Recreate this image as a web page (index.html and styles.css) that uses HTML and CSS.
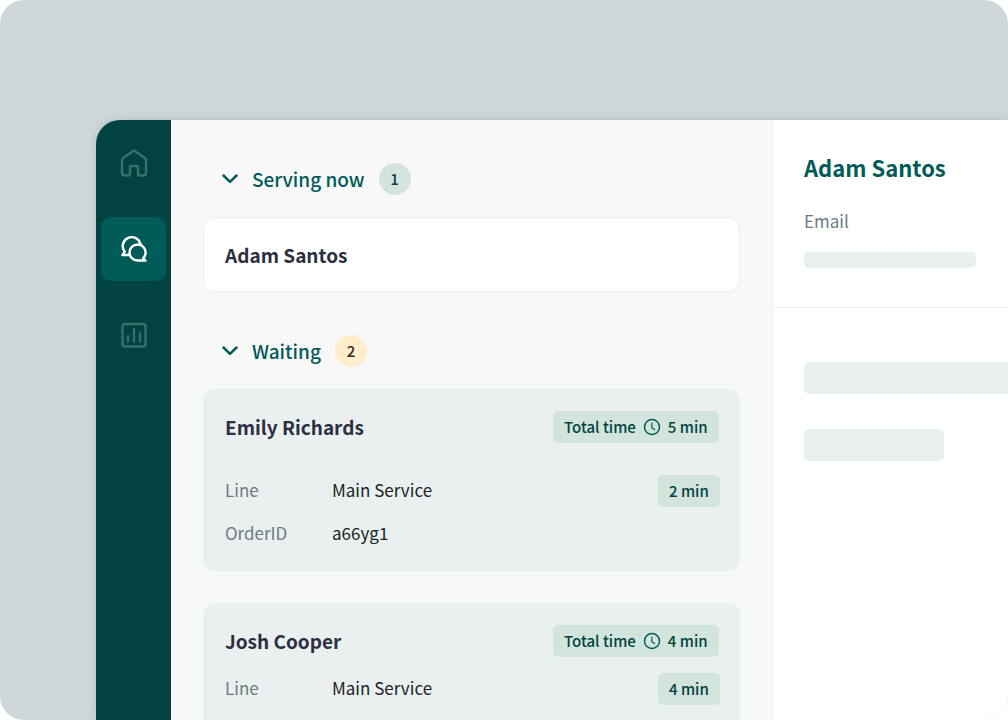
FILE: index.html
```html
<!DOCTYPE html>
<html lang="en">
<head>
<meta charset="utf-8">
<meta name="viewport" content="width=device-width, initial-scale=1">
<title>Service desk</title>
<link rel="stylesheet" href="styles.css">
</head>
<body>
<div class="stage">
  <div class="app">
    <nav class="rail" aria-label="Main">
      <button class="rail-item" type="button" aria-label="Home">
        <svg class="rail-icon" viewBox="0 0 28 28" fill="none" stroke="currentColor" stroke-width="2.400" stroke-linejoin="round"><path d="M14 1.5 2.7 9.3Q2 9.8 2 10.8V23.5Q2 26.5 5 26.5H8.5Q10 26.5 10 25V18.5Q10 17 11.5 17H16.5Q18 17 18 18.5V25Q18 26.5 19.500 26.500H23Q26 26.500 26 23.500V10.800Q26 9.800 25.300 9.300Z"/></svg>
      </button>
      <button class="rail-item is-active" type="button" aria-label="Conversations" aria-current="page">
        <svg class="rail-icon" viewBox="0 0 28 28" fill="none" stroke="currentColor" stroke-width="2.400" stroke-linecap="round" stroke-linejoin="round"><path d="M9 20H2.500L4.700 16.800A9 9 0 1 1 20.400 8.800"/><path d="M17.500 9.500a8 8 0 1 0 0 16H25.500L23.200 23.100A8 8 0 0 0 17.500 9.500Z"/></svg>
      </button>
      <button class="rail-item" type="button" aria-label="Reports">
        <svg class="rail-icon" viewBox="0 0 28 28" fill="none" stroke="currentColor" stroke-width="2.400" stroke-linecap="round"><rect x="2.500" y="3" width="23" height="22.500" rx="2.500"/><path d="M8 15v5.500M14 8v12.500M20 12.500v8"/></svg>
      </button>
    </nav>

    <main class="queue">
      <section class="group">
        <h2 class="group-head">
          <button class="group-toggle" type="button" aria-expanded="true">
            <svg class="chevron" viewBox="0 0 16 10" fill="none" stroke="currentColor" stroke-width="2.500" stroke-linecap="round" stroke-linejoin="round"><path d="m1.500 1.500 6.500 6.300 6.500-6.300"/></svg>
            Serving now
            <span class="count count-green">1</span>
          </button>
        </h2>
        <article class="card card-plain">
          <h3 class="name">Adam Santos</h3>
        </article>
      </section>

      <section class="group">
        <h2 class="group-head">
          <button class="group-toggle" type="button" aria-expanded="true">
            <svg class="chevron" viewBox="0 0 16 10" fill="none" stroke="currentColor" stroke-width="2.500" stroke-linecap="round" stroke-linejoin="round"><path d="m1.500 1.500 6.500 6.300 6.500-6.300"/></svg>
            Waiting
            <span class="count count-yellow">2</span>
          </button>
        </h2>
        <div class="cards">
          <article class="card card-roomy">
            <header class="card-head">
              <h3 class="name">Emily Richards</h3>
              <div class="slot slot-wide">
                <span class="tag">Total time
                  <svg class="clock" viewBox="0 0 18 18" fill="none" stroke="currentColor" stroke-width="1.500" stroke-linecap="round" stroke-linejoin="round"><circle cx="9" cy="9" r="7.500"/><path d="M8.800 5v4.800l2.800 1.800" stroke-width="1.200"/></svg>
                  5 min</span>
              </div>
            </header>
            <dl class="facts">
              <dt>Line</dt><dd>Main Service</dd><dd class="slot slot-short"><span class="tag">2 min</span></dd>
              <dt>OrderID</dt><dd>a66yg1</dd>
            </dl>
          </article>
          <article class="card">
            <header class="card-head">
              <h3 class="name">Josh Cooper</h3>
              <div class="slot slot-wide">
                <span class="tag">Total time
                  <svg class="clock" viewBox="0 0 18 18" fill="none" stroke="currentColor" stroke-width="1.500" stroke-linecap="round" stroke-linejoin="round"><circle cx="9" cy="9" r="7.500"/><path d="M8.800 5v4.800l2.800 1.800" stroke-width="1.200"/></svg>
                  4 min</span>
              </div>
            </header>
            <dl class="facts">
              <dt>Line</dt><dd>Main Service</dd><dd class="slot slot-short"><span class="tag">4 min</span></dd>
            </dl>
          </article>
        </div>
      </section>
    </main>

    <aside class="detail">
      <div class="detail-top">
        <h2 class="detail-name">Adam Santos</h2>
        <p class="detail-label">Email</p>
        <div class="bar bar-line"></div>
      </div>
      <div class="detail-body">
        <div class="bar bar-full"></div>
        <div class="bar bar-short"></div>
      </div>
    </aside>
  </div>
</div>
</body>
</html>
```
FILE: styles.css
```css
* { box-sizing: border-box; }

body {
  margin: 0;
  background: #fff;
  color: #1f1f24;
  font-family: "Noto Sans CJK SC", "Noto Sans", sans-serif;
  font-size: 17px;
  line-height: 24px;
}

h2, h3, p, dl, dd { margin: 0; }

button {
  border: 0;
  padding: 0;
  background: none;
  color: inherit;
  font: inherit;
  cursor: pointer;
}

.stage {
  display: flex;
  height: 100vh;
  padding: 120px 0 0 96px;
  overflow: hidden;
  border-radius: 24px;
  background: #ced6d9;
}

.app {
  display: grid;
  flex: 1;
  grid-template-columns: 75px minmax(0, 1fr) 236px;
  border-top-left-radius: 24px;
  box-shadow: 0 0 8px rgba(0, 40, 40, 0.12);
}

.rail {
  display: flex;
  flex-direction: column;
  gap: 22px;
  padding: 11px 5px;
  border-top-left-radius: 24px;
  background: #004341;
  color: #39706e;
}

.rail-item {
  display: grid;
  place-items: center;
  height: 64px;
  border-radius: 10px;
}

.rail-item.is-active {
  background: #005b59;
  color: #fff;
}

.rail-icon {
  width: 28px;
  height: 28px;
}

.queue {
  display: flex;
  flex-direction: column;
  gap: 43px;
  min-height: 0;
  padding: 43px 32px 0;
  overflow: hidden;
  background: #f8f8f8;
}

.group { flex: none; }

.group-head {
  margin-bottom: 22px;
  color: #005b59;
  font-size: 19px;
  font-weight: 500;
}

.group-toggle {
  display: flex;
  align-items: center;
  gap: 14px;
  padding-left: 19px;
}

.chevron {
  width: 16px;
  height: 10px;
}

.count {
  width: 32px;
  border-radius: 50%;
  font-size: 15px;
  line-height: 32px;
  text-align: center;
}

.count-green {
  background: #d2e4dc;
  color: #004341;
}

.count-yellow {
  background: #ffedcb;
  color: #3b2428;
}

.cards {
  display: grid;
  gap: 32px;
}

.card {
  display: grid;
  gap: 16px;
  padding: 22px 22px 24px;
  border-radius: 12px;
  background: #eaf0f0;
}

.card-roomy { gap: 32px; }

.card-plain {
  padding: 25px 21px 24px;
  border: 1px solid #eaf0f0;
  background: #fff;
}

.name {
  color: #2e2e41;
  font-size: 19px;
  font-weight: 700;
}

.card-head {
  display: flex;
  align-items: center;
  justify-content: space-between;
}

.slot { display: flex; }

.slot-wide { width: 165px; }

.slot-short { width: 60px; }

.tag {
  display: flex;
  align-items: center;
  gap: 7px;
  padding: 0 11px;
  border-radius: 5px;
  background: #d2e4dc;
  color: #004341;
  font-size: 15px;
  font-weight: 500;
  line-height: 32px;
  white-space: nowrap;
}

.clock {
  width: 18px;
  height: 18px;
  color: #005b59;
}

.facts {
  display: grid;
  grid-template-columns: 107px 1fr auto;
  row-gap: 14px;
  align-items: center;
}

.facts dt,
.facts dd { padding-bottom: 2px; }

.facts dt { color: #6e7a80; }

.facts .slot { padding-bottom: 0; }

.detail {
  border-left: 1px solid #eaf0f0;
  background: #fff;
}

.detail-top {
  padding: 35px 0 39px 31px;
  border-bottom: 1px solid #eaf0f0;
}

.detail-name {
  color: #005b59;
  font-size: 22px;
  font-weight: 700;
}

.detail-label {
  margin: 30px 0 19px;
  color: #6e7a80;
}

.detail-body {
  display: grid;
  gap: 35px;
  padding: 54px 0 0 31px;
}

.bar {
  height: 32px;
  border-radius: 5px;
  background: #eaf0f0;
}

.bar-line {
  width: 172px;
  height: 16px;
}

.bar-full {
  border-top-right-radius: 0;
  border-bottom-right-radius: 0;
}

.bar-short { width: 140px; }
```
